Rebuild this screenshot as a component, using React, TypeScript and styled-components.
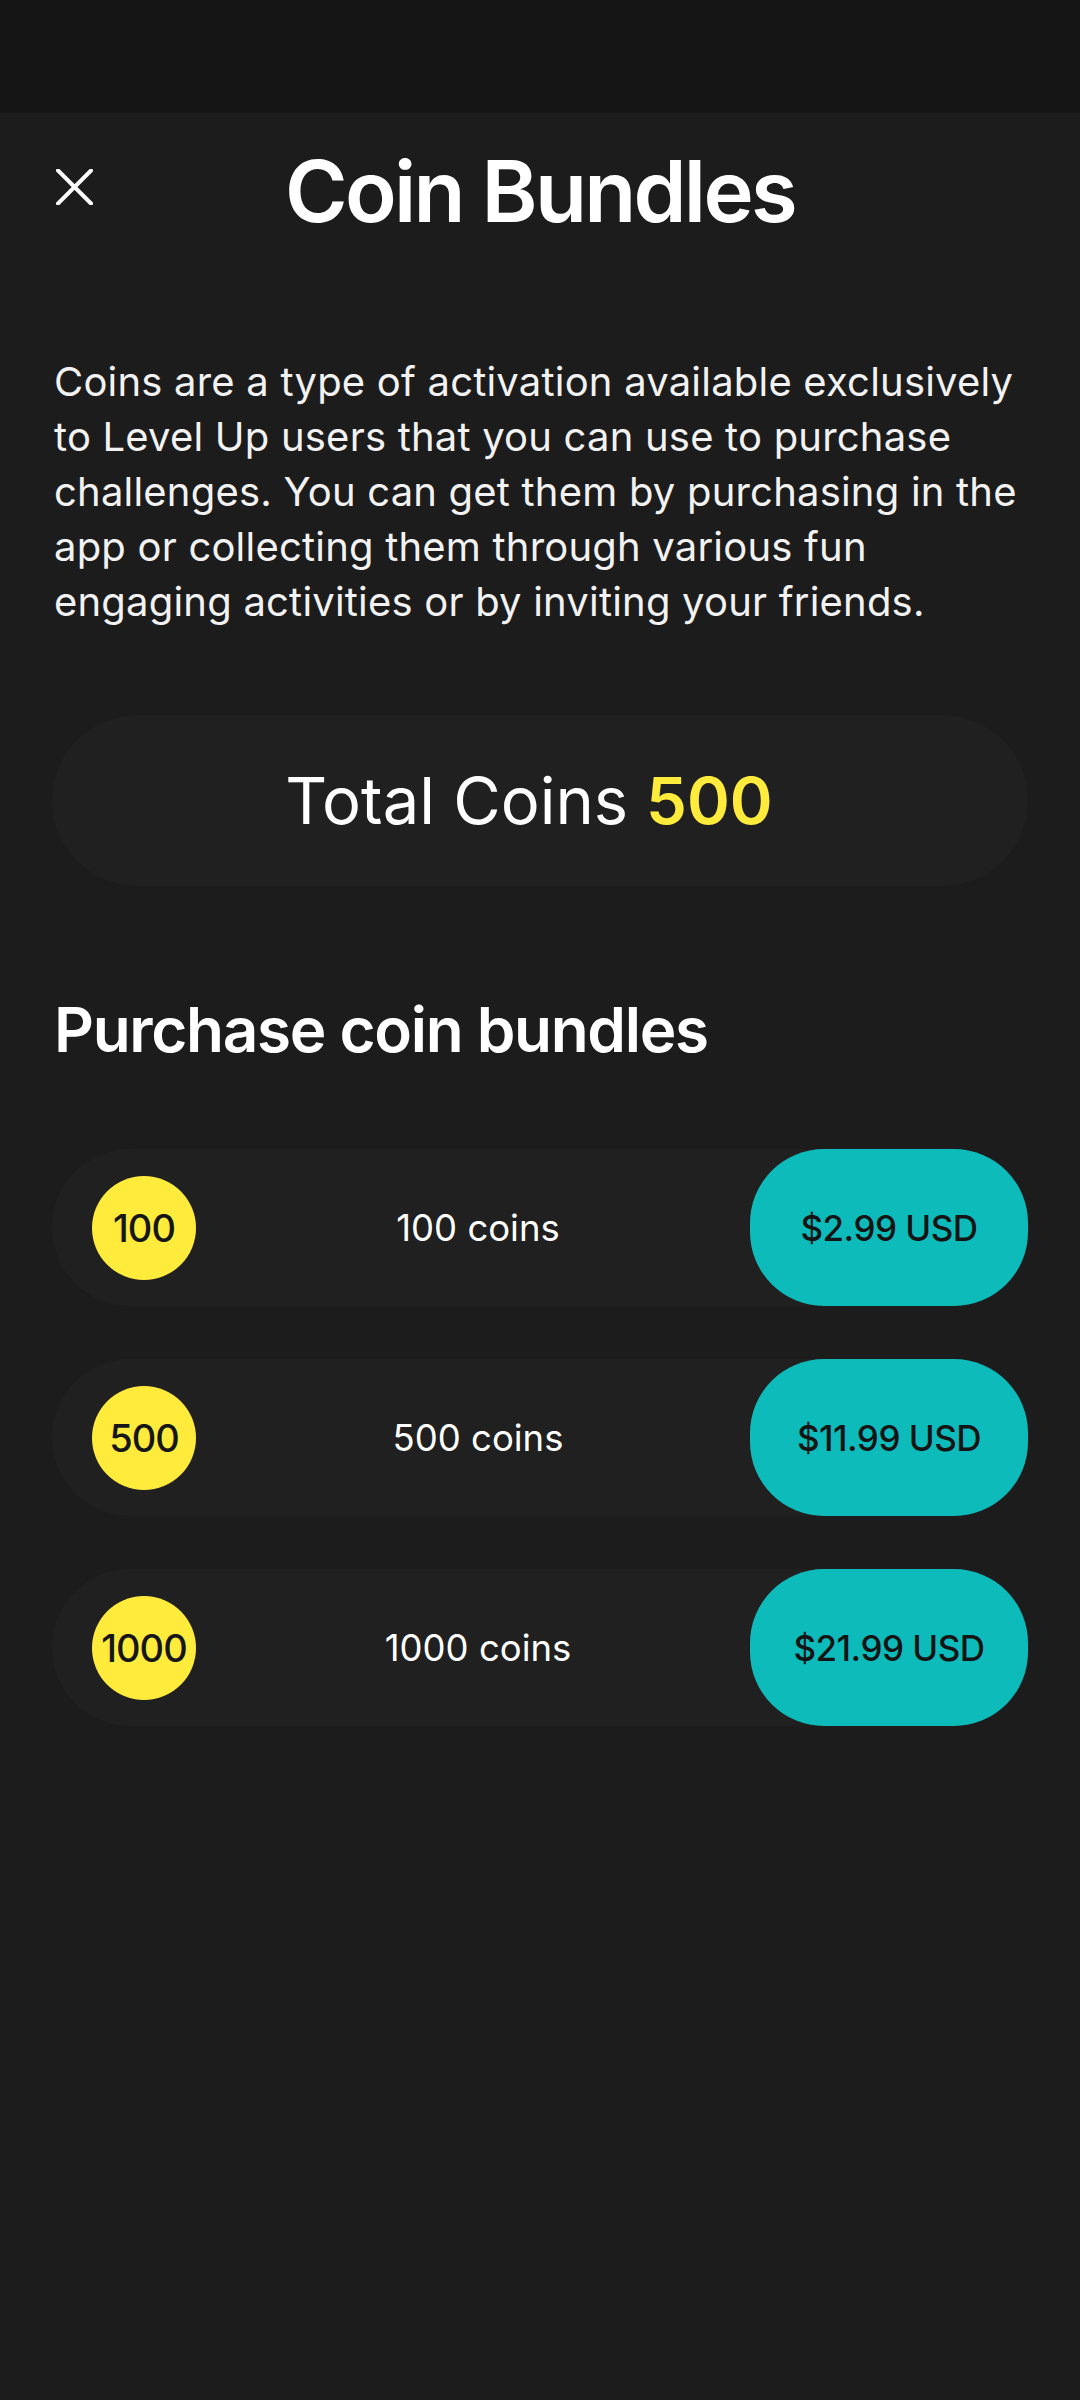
import React from 'react';
import styled, { createGlobalStyle } from 'styled-components';

const GlobalStyle = createGlobalStyle`
  html, body {
    margin: 0;
    padding: 0;
    background: #1c1c1c;
  }
  body {
    font-family: Inter, 'Noto Sans', sans-serif;
    color: #ffffff;
  }
`;

const Page = styled.div`
  min-height: 2400px;
  background: #1c1c1c;
`;

const StatusBar = styled.div`
  height: 113px;
  background: #151515;
`;

const Header = styled.header`
  display: grid;
  grid-template-columns: 1fr auto 1fr;
  align-items: center;
  padding: 36px 52px 0;
`;

const CloseButton = styled.button`
  justify-self: start;
  width: 44px;
  height: 44px;
  margin-top: -9px;
  padding: 0;
  border: none;
  background: transparent;
  display: flex;
  align-items: center;
  justify-content: center;
  cursor: pointer;
`;

const Title = styled.h1`
  margin: 0;
  font-size: 85px;
  line-height: 1;
  font-weight: 600;
  letter-spacing: -2.7px;
`;

const Content = styled.main`
  padding: 0 52px;
`;

const Intro = styled.p`
  margin: 120px -24px 0 2px;
  font-size: 40px;
  line-height: 55px;
  color: #f2f2f2;
  letter-spacing: 0.2px;
`;

const TotalCard = styled.section`
  margin-top: 86px;
  height: 171px;
  border-radius: 86px;
  background: #202020;
  display: flex;
  align-items: center;
  justify-content: center;
  padding-right: 22px;
  font-size: 65px;
  line-height: 1;
`;

const Amount = styled.span`
  color: #ffeb3b;
  font-weight: 600;
  margin-left: 18px;
`;

const SectionTitle = styled.h2`
  margin: 113px 0 0 2px;
  font-size: 62px;
  line-height: 1;
  font-weight: 600;
  letter-spacing: -1.3px;
`;

const BundleList = styled.ul`
  list-style: none;
  margin: 88px 0 0;
  padding: 0;
  display: flex;
  flex-direction: column;
  gap: 53px;
`;

const BundleRow = styled.li`
  height: 157px;
  border-radius: 78px;
  background: #202020;
  display: flex;
  align-items: center;
  padding-left: 40px;
`;

const Coin = styled.div`
  flex: none;
  width: 104px;
  height: 104px;
  border-radius: 50%;
  background: #ffeb3b;
  color: #161616;
  display: flex;
  align-items: center;
  justify-content: center;
  font-size: 38px;
  font-weight: 500;
  letter-spacing: -1px;
`;

const BundleLabel = styled.span`
  flex: 1;
  text-align: center;
  padding-left: 10px;
  font-size: 36.5px;
  color: #ffffff;
`;

const PriceButton = styled.button`
  flex: none;
  width: 278px;
  height: 157px;
  border: none;
  border-radius: 74px;
  background: #0ebbbb;
  color: #141414;
  font-family: inherit;
  font-size: 35px;
  font-weight: 500;
  letter-spacing: -0.5px;
  cursor: pointer;
`;

const bundles = [
  { coins: 100, price: '$2.99 USD' },
  { coins: 500, price: '$11.99 USD' },
  { coins: 1000, price: '$21.99 USD' },
];

const introLines = [
  'Coins are a type of activation available exclusively',
  'to Level Up users that you can use to purchase',
  'challenges. You can get them by purchasing in the',
  'app or collecting them through various fun',
  'engaging activities or by inviting your friends.',
];

const CloseIcon = () => (
  <svg width="37" height="36" viewBox="0 0 37 36" fill="none">
    <path d="M2 1.5L35 34.5M35 1.5L2 34.5" stroke="#ffffff" strokeWidth="4" strokeLinecap="square" />
  </svg>
);

const App: React.FC = () => (
  <Page>
    <GlobalStyle />
    <StatusBar />
    <Header>
      <CloseButton aria-label="Close">
        <CloseIcon />
      </CloseButton>
      <Title>Coin Bundles</Title>
      <span />
    </Header>

    <Content>
      <Intro>
        {introLines.map((line, i) => (
          <React.Fragment key={i}>
            {line}
            {i < introLines.length - 1 && <br />}
          </React.Fragment>
        ))}
      </Intro>

      <TotalCard>
        Total Coins<Amount>500</Amount>
      </TotalCard>

      <SectionTitle>Purchase coin bundles</SectionTitle>

      <BundleList>
        {bundles.map((b) => (
          <BundleRow key={b.coins}>
            <Coin>{b.coins}</Coin>
            <BundleLabel>{b.coins} coins</BundleLabel>
            <PriceButton>{b.price}</PriceButton>
          </BundleRow>
        ))}
      </BundleList>
    </Content>
  </Page>
);

export default App;
